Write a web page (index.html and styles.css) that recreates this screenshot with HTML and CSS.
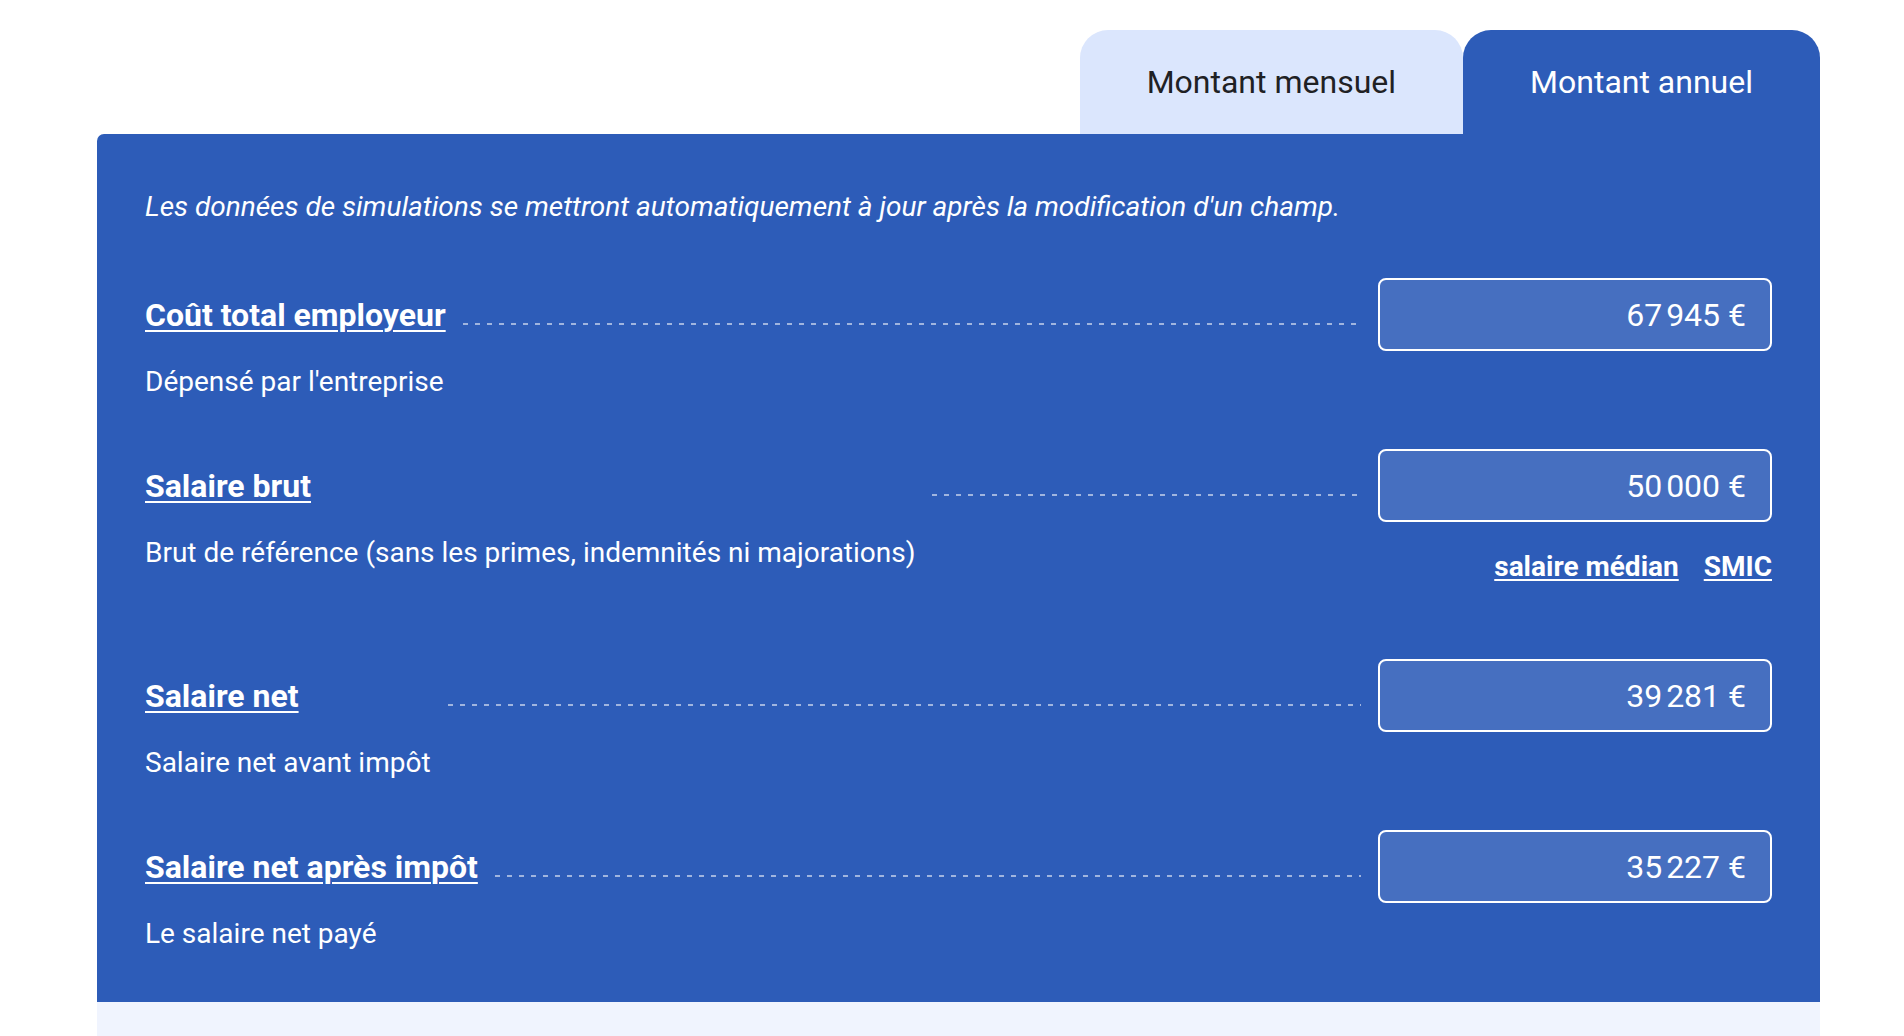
FILE: index.html
```html
<!DOCTYPE html>
<html lang="fr">
<head>
  <meta charset="UTF-8" />
  <title>Simulateur de salaire</title>
  <link rel="stylesheet" href="styles.css">
</head>
<body>
  <div class="wrap">
    <div class="tabs">
      <div class="tab">Montant mensuel</div>
      <div class="tab active">Montant annuel</div>
    </div>

    <div class="panel">
      <p class="intro">Les données de simulations se mettront automatiquement à jour après la modification d'un champ.</p>

      <div class="row">
        <div class="left">
          <a class="label" href="#">Coût total employeur</a>
          <div class="desc">Dépensé par l'entreprise</div>
        </div>
        <div class="dots"></div>
        <div class="field">
          <div class="value">67&#8239;945 €</div>
        </div>
      </div>

      <div class="row">
        <div class="left">
          <a class="label" href="#">Salaire brut</a>
          <div class="desc">Brut de référence (sans les primes, indemnités ni majorations)</div>
        </div>
        <div class="dots"></div>
        <div class="field">
          <div class="value">50&#8239;000 €</div>
          <div class="quick">
            <a href="#">salaire médian</a>
            <a href="#">SMIC</a>
          </div>
        </div>
      </div>

      <div class="row">
        <div class="left">
          <a class="label" href="#">Salaire net</a>
          <div class="desc">Salaire net avant impôt</div>
        </div>
        <div class="dots"></div>
        <div class="field">
          <div class="value">39&#8239;281 €</div>
        </div>
      </div>

      <div class="row">
        <div class="left">
          <a class="label" href="#">Salaire net après impôt</a>
          <div class="desc">Le salaire net payé</div>
        </div>
        <div class="dots"></div>
        <div class="field">
          <div class="value">35&#8239;227 €</div>
        </div>
      </div>
    </div>

    <div class="below"></div>
  </div>
</body>
</html>
```

FILE: styles.css
```css
body {
  margin: 0;
  background: #fff;
  font-family: Roboto, 'Liberation Sans', sans-serif;
  color: #fff;
}
.wrap {
  margin: 0 84px 0 97px;
  padding-top: 30px;
}
.tabs {
  display: flex;
  justify-content: flex-end;
}
.tab {
  height: 104px;
  padding: 0 67px;
  display: flex;
  align-items: center;
  font-size: 32px;
  color: #1f2124;
  background: #dbe6fd;
  border-radius: 28px 28px 0 0;
}
.tab.active {
  background: #2d5cb8;
  color: #fff;
}
.panel {
  background: #2d5cb8;
  border-radius: 7px 0 0 0;
  padding: 55px 48px 1px;
}
.intro {
  margin: 0 0 53px;
  font-size: 28px;
  font-style: italic;
  line-height: 36px;
}
.row {
  display: flex;
  align-items: flex-start;
  margin-bottom: 49px;
}
.left {
  display: flex;
  flex-direction: column;
  align-items: flex-start;
}
.label {
  height: 73px;
  display: flex;
  align-items: center;
  font-size: 32px;
  font-weight: 700;
  color: #fff;
  text-decoration: underline;
  text-underline-offset: 4px;
  text-decoration-thickness: 2px;
}
.desc {
  margin-top: 13px;
  font-size: 28px;
  line-height: 36px;
}
.dots {
  flex: 1;
  height: 2px;
  margin: 45px 17px 0;
  background: repeating-linear-gradient(to right, rgba(255,255,255,0.55) 0 5px, transparent 5px 12px);
}
.field {
  width: 394px;
}
.value {
  height: 73px;
  box-sizing: border-box;
  border: 2px solid #fff;
  border-radius: 8px;
  background: rgba(255,255,255,0.12);
  display: flex;
  align-items: center;
  justify-content: flex-end;
  padding-right: 24px;
  font-size: 32px;
}
.quick {
  display: flex;
  justify-content: flex-end;
  gap: 25px;
  margin: 30px 0 28px;
  line-height: 30px;
}
.quick a {
  color: #fff;
  font-size: 28px;
  font-weight: 700;
  text-decoration: underline;
  text-underline-offset: 3px;
  text-decoration-thickness: 2px;
}
.below {
  height: 40px;
  background: #f0f4fe;
}
```
